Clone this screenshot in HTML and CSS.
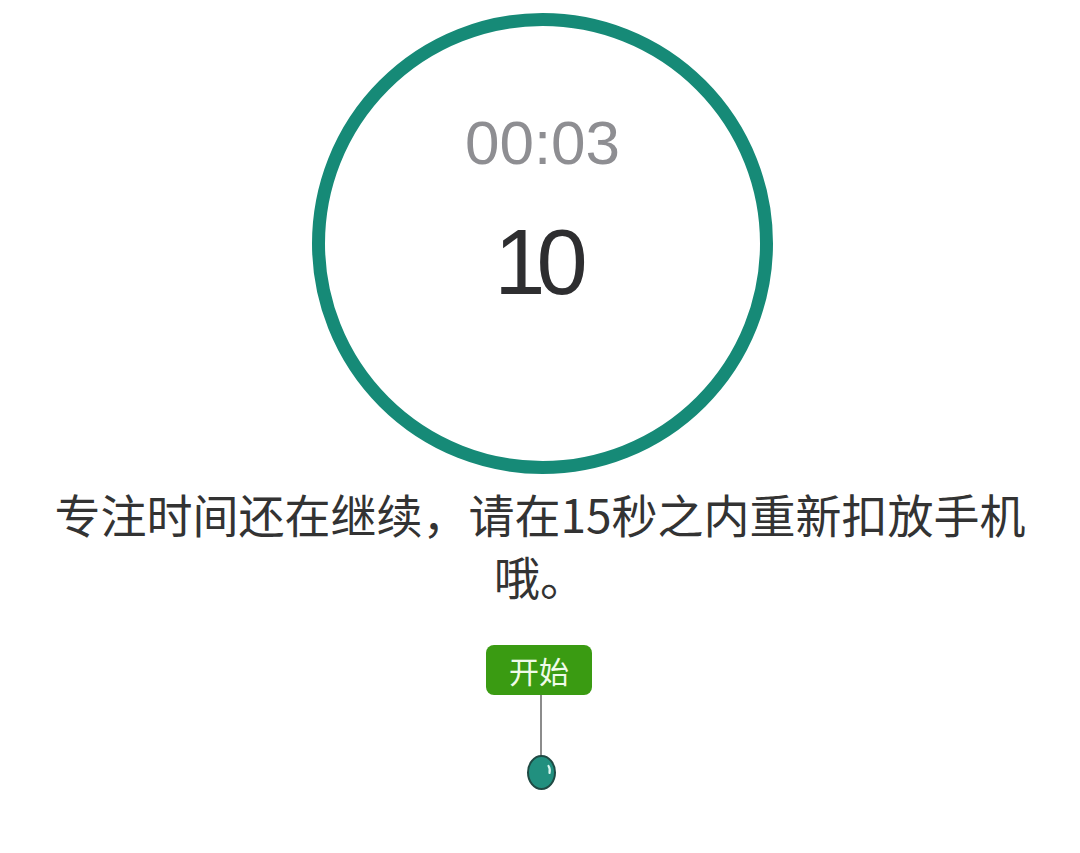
FILE: index.html
```html
<!DOCTYPE html>
<html lang="zh">
<head>
<meta charset="utf-8">
<link rel="stylesheet" href="styles.css">
</head>
<body>
<main class="page">
  <div class="ring-wrap">
    <div class="ring">
      <div class="elapsed">00:03</div>
      <div class="count">10</div>
    </div>
  </div>
  <p class="notice">专注时间还在继续，请在15秒之内重新扣放手机哦。</p>
  <div class="start">
    <div class="start-btn">开始</div>
    <div class="stem"></div>
    <svg class="ball" width="31" height="37" viewBox="0 0 31 37">
      <ellipse cx="15.5" cy="18.5" rx="13.5" ry="16.5" fill="#21907f" stroke="#1f4a44" stroke-width="2"/>
      <path d="M22.5 12 Q24.5 15 23.5 19" stroke="#d8f5ef" stroke-width="2.2" fill="none" stroke-linecap="round"/>
    </svg>
  </div>
</main>
</body>
</html>
```

FILE: styles.css
```css
html, body {
  margin: 0;
  padding: 0;
  background: #ffffff;
}

.page {
  width: 1080px;
  height: 853px;
  display: flex;
  flex-direction: column;
  align-items: center;
  font-family: "Liberation Sans", "Noto Sans CJK SC", sans-serif;
}

.ring-wrap {
  padding-top: 13px;
  padding-left: 5px;
}

.ring {
  width: 461px;
  height: 461px;
  box-sizing: border-box;
  border: 13px solid #168a77;
  border-radius: 50%;
  display: flex;
  flex-direction: column;
  align-items: center;
  padding-top: 86px;
}

.elapsed {
  font-size: 62px;
  line-height: 1;
  color: #8e8e92;
  height: 62px;
}

.count {
  margin-top: 42px;
  margin-left: -12px;
  font-size: 92px;
  line-height: 1;
  color: #2e2e30;
  letter-spacing: -9px;
  height: 93px;
}

.notice {
  margin: 8px auto 0;
  max-width: 990px;
  text-align: center;
  font-family: "Noto Sans CJK SC", "Liberation Sans", sans-serif;
  font-size: 46px;
  line-height: 62px;
  color: #333333;
}

.start {
  margin-top: 39px;
  display: flex;
  flex-direction: column;
  align-items: center;
  padding-left: 2px;
}

.start-btn {
  width: 106px;
  height: 50px;
  box-sizing: border-box;
  border-radius: 8px;
  background: #3a9b12;
  color: #effbe9;
  font-family: "Noto Sans CJK SC", sans-serif;
  font-size: 30px;
  line-height: 50px;
  text-align: center;
  margin-right: 4px;
}

.stem {
  width: 2px;
  height: 61px;
  background: #8c8c8c;
}

.ball {
  display: block;
  margin-top: -2px;
}
```
